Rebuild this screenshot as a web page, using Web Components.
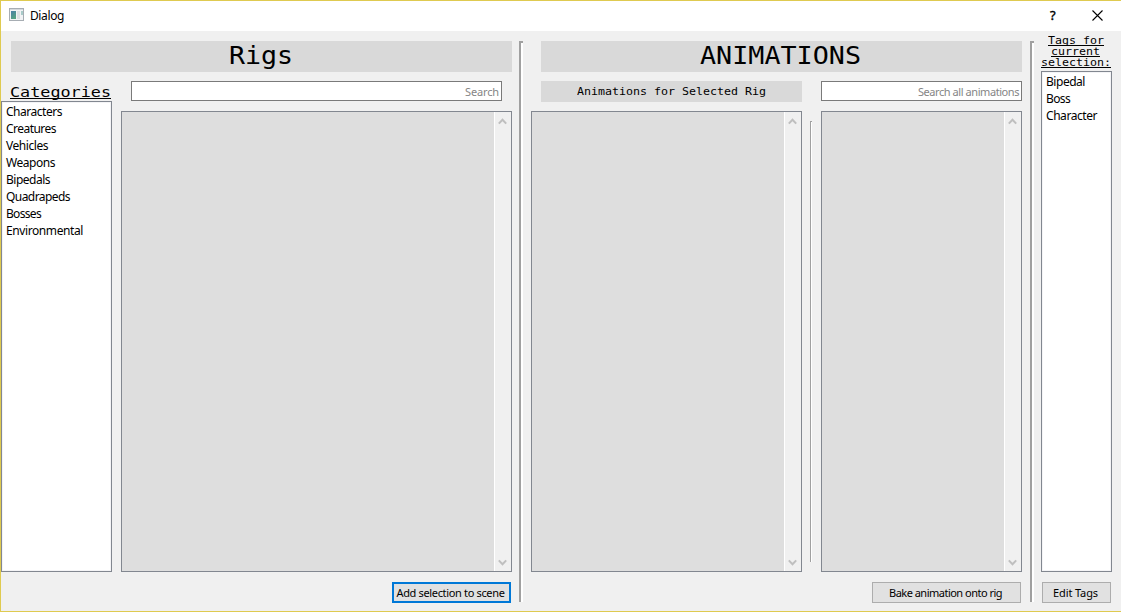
<!DOCTYPE html>
<html lang="en"><head><meta charset="utf-8"><title>Dialog</title>
<style>html,body{margin:0;width:1121px;height:612px;overflow:hidden}</style></head>
<body>
<app-dialog></app-dialog>
<script>
const define = (name, html, init) => customElements.define(name, class extends HTMLElement {
  constructor() { super(); this.attachShadow({mode: 'open'}).innerHTML = html; }
  connectedCallback() { if (init) init(this, this.shadowRoot); }
});

/* Single-line text fitted to a given width, by letter spacing or (with "wide") by stretching the glyphs. */
define('fit-text', `<style>:host{display:inline-block;white-space:pre}span{display:inline-block;transform-origin:0 50%}
:host([line]) span{text-decoration:underline;text-underline-offset:1px;text-decoration-thickness:1px;text-decoration-skip-ink:none}</style><span><slot></slot></span>`, (el, root) => {
  const w = +el.getAttribute('w'), s = root.querySelector('span');
  const n = el.textContent.length, natural = s.getBoundingClientRect().width;
  if (el.hasAttribute('wide')) {
    el.style.width = w + 'px';
    s.style.transform = `scaleX(${w / natural})`;
  } else if (w && n) s.style.letterSpacing = ((w - natural) / n) + 'px';
});

define('title-bar', `<style>
:host{display:flex;align-items:center;height:30px;background:#fff;padding-left:8px;box-sizing:border-box;font:12px "Noto Sans",sans-serif;color:#000}
.i{margin:-3px 6px 0 0}.t{flex:1;line-height:16px;margin-top:-1px}.q{font-size:13px;line-height:16px;width:7px;margin-right:35px;margin-top:-3px;-webkit-text-stroke:.4px #000}
.x{margin:-2px 18px 0 0}svg{display:block}</style>
<svg class="i" width="15" height="13"><defs><linearGradient id="g" x2=".5" y2="1"><stop stop-color="#4a7fa8"/><stop offset="1" stop-color="#55a282"/></linearGradient></defs><rect x=".5" y=".5" width="14" height="12" fill="#f2f3f5" stroke="#a7adb3"/><path d="M1 1.5h13" stroke="#d5d9dd"/><rect x="2" y="3" width="5" height="8" fill="url(#g)"/><rect x="8" y="3" width="3" height="8" fill="#dde0e3"/><rect x="12" y="3" width="2" height="4" fill="#a9cbc9"/></svg>
<div class="t"><fit-text><slot></slot></fit-text></div><div class="q">?</div>
<svg class="x" width="11" height="11"><path d="M.5.5l10 10M10.500.5l-10 10" stroke="#000" stroke-width="1.1"/></svg>`, (el, root) => {
  /* slotted titles are measured from the host's own text */
  const s = root.querySelector('fit-text').shadowRoot.querySelector('span');
  s.style.letterSpacing = ((34 - s.getBoundingClientRect().width) / el.textContent.length) + 'px';
});

define('head-label', `<style>:host{display:flex;align-items:center;justify-content:center;background:#d9d9d9;font-family:"DejaVu Sans Mono",monospace;color:#000;box-sizing:border-box;white-space:pre}</style><slot></slot>`);

define('search-field', `<style>:host{display:flex;align-items:center;justify-content:flex-end;height:20px;box-sizing:border-box;border:1px solid #7a7a7a;background:#fff;color:#858585;font:11px "Noto Sans",sans-serif;padding:0 2px 0 0}</style><slot></slot>`);

define('item-list', `<style>:host{display:block;box-sizing:border-box;border:1px solid #828790;background:#fff;box-shadow:inset 0 0 0 1px #f4f4f6;padding:1px 4px;font:12px/17px "Noto Sans",sans-serif;color:#000}
::slotted(fit-text){display:block!important;height:17px}</style><slot></slot>`);

define('scroll-panel', `<style>:host{display:flex;justify-content:flex-end;box-sizing:border-box;border:1px solid #828790;background:#dedede}
.b{width:16px;background:#f0f0f0;border-left:1px solid #fff;display:flex;flex-direction:column;justify-content:space-between;align-items:flex-start;padding:6px 0 5px;box-sizing:content-box}svg{display:block;margin-left:3px}</style>
<div class="b"><svg width="9" height="7"><path d="M.8 5.600L4.500 1.700l3.700 3.900" fill="none" stroke="#bfbfbf" stroke-width="2"/></svg><svg width="9" height="7"><path d="M.8 1.400L4.500 5.300l3.700-3.900" fill="none" stroke="#bfbfbf" stroke-width="2"/></svg></div>`);

define('v-line', `<style>:host{display:block;box-sizing:border-box;width:4px;border-left:2px solid #a0a0a0;background:linear-gradient(#a0a0a0 2px,#fff 2px)}
:host([thin]){width:2px;border-left-width:1px;background:linear-gradient(#a0a0a0 1px,#fff 1px)}</style>`);

define('push-button', `<style>:host{display:flex;align-items:center;justify-content:center;box-sizing:border-box;height:21px;border:1px solid #adadad;background:#e1e1e1;color:#000;font:11px "Noto Sans",sans-serif;padding-bottom:1px}
:host([default]){border:2px solid #0078d7}</style><slot></slot>`);

define('app-dialog', `<style>
:host{display:flex;flex-direction:column;width:1121px;height:612px;box-sizing:border-box;border:solid #dfca50;border-width:1px 0 1px 1px;background:#f0f0f0}
.main{flex:1;display:flex;align-items:flex-start}
.rigs{width:511px;margin:10px 7px 0 0}.rigs>head-label{margin-left:10px;height:31px;font-size:24px;padding:0 2px 1px 0}
.row,.foot{display:flex}
.cats{width:111px;margin-right:9px;display:flex;flex-direction:column}
.u{font-family:"DejaVu Sans Mono",monospace}
.cats .u{font-size:14.6px;height:29px;box-sizing:border-box;padding:10px 0 0 9px;line-height:19px;width:111px}
.cats item-list{height:471px}
.right{flex:1}.right search-field{margin:9px 10px 10px}.right scroll-panel{height:461px}
.foot{justify-content:flex-end;margin-top:10px}
.div{height:561px;margin-top:10px}
.anim{width:491px;margin:10px 8px 0 8px}.anim>head-label{height:31px;margin-left:10px;font-size:24px;padding:0 2px 1px 0}
.an{display:grid;grid-template-columns:271px 201px;column-gap:19px}
.an head-label{height:21px;margin:9px 0 9px 10px;font-size:10.3px;padding-bottom:2px}
.an search-field{margin:9px 0 10px}
.panels{display:flex;align-items:flex-start}.panels scroll-panel{height:461px}
.tags{width:71px;margin-left:7px}
.tags .u{font-size:10.3px;line-height:11px;display:flex;flex-direction:column;align-items:center;padding:4px 2px 0 0;height:40px;box-sizing:border-box}
.tags .u fit-text{height:11px}
.tags item-list{height:501px}
.tags push-button{width:69px}
</style>
<title-bar>Dialog</title-bar>
<div class="main">
 <div class="rigs"><head-label><fit-text wide w="64">Rigs</fit-text></head-label>
  <div class="row"><div class="cats"><div class="u"><fit-text wide line w="101">Categories</fit-text></div>
   <item-list><fit-text w="56">Characters</fit-text><fit-text w="50">Creatures</fit-text><fit-text w="42">Vehicles</fit-text><fit-text w="49">Weapons</fit-text><fit-text w="44">Bipedals</fit-text><fit-text w="64">Quadrapeds</fit-text><fit-text w="35">Bosses</fit-text><fit-text w="77">Environmental</fit-text></item-list></div>
   <div class="right"><search-field><fit-text w="34">Search</fit-text></search-field><scroll-panel></scroll-panel></div></div>
  <div class="foot"><push-button default style="width:119px;margin-right:1px;padding-right:2px"><fit-text w="108">Add selection to scene</fit-text></push-button></div>
 </div>
 <v-line class="div"></v-line>
 <div class="anim"><head-label><fit-text wide w="161">ANIMATIONS</fit-text></head-label>
  <div class="an"><head-label><fit-text wide w="189">Animations for Selected Rig</fit-text></head-label><search-field><fit-text w="101">Search all animations</fit-text></search-field></div>
  <div class="panels"><scroll-panel style="width:271px"></scroll-panel><v-line thin style="height:441px;margin:10px 9px 0 8px"></v-line><scroll-panel style="width:201px"></scroll-panel></div>
  <div class="foot"><push-button style="width:149px;margin-right:1px;padding-right:2px"><fit-text w="113">Bake animation onto rig</fit-text></push-button></div>
 </div>
 <v-line class="div"></v-line>
 <div class="tags"><div class="u"><fit-text wide line w="56">Tags for</fit-text><fit-text wide line w="49">current</fit-text><fit-text wide line w="70">selection:</fit-text></div>
  <item-list><fit-text w="39">Bipedal</fit-text><fit-text w="24">Boss</fit-text><fit-text w="51">Character</fit-text></item-list>
  <div class="foot"><push-button style="margin-right:1px;padding-right:2px"><fit-text w="45">Edit Tags</fit-text></push-button></div></div>
</div>`);
</script>
</body></html>
